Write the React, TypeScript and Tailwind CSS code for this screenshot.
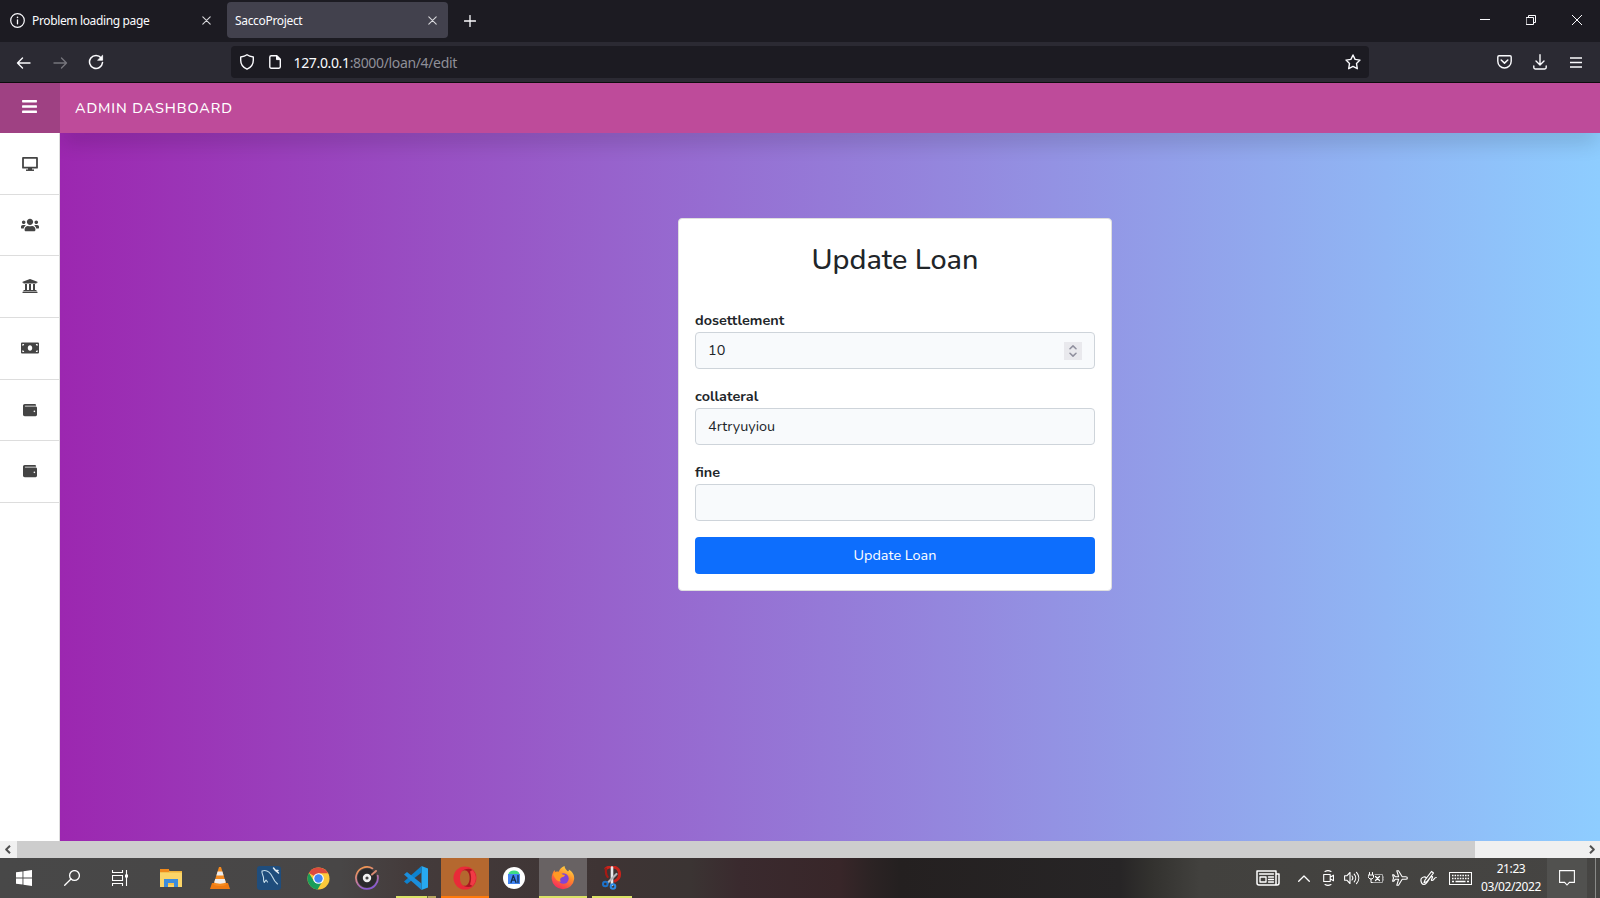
import React from "react";
import { FaBars, FaUsers, FaUniversity, FaMoneyBill, FaWallet } from "react-icons/fa";

type SvgProps = {
  w: number;
  h?: number;
  box?: string;
  className?: string;
  children: React.ReactNode;
};

function Svg({ w, h = w, box, className = "", children }: SvgProps) {
  return (
    <svg
      width={w}
      height={h}
      viewBox={box ?? `0 0 ${w} ${h}`}
      fill="none"
      stroke="currentColor"
      strokeWidth="1.3"
      strokeLinecap="round"
      strokeLinejoin="round"
      className={`block shrink-0 ${className}`}
    >
      {children}
    </svg>
  );
}

const Cross = () => (
  <Svg w={9} className="text-[#d8d8dc]">
    <path d="M.8.8l7.4 7.4M8.2.8L.8 8.2" strokeWidth="1.1" />
  </Svg>
);

function TabBar() {
  return (
    <div className="flex h-[42px] shrink-0 items-center bg-[#1c1b22] text-[12px] text-[#fbfbfe]">
      <div className="-mt-px flex w-[227px] items-center pr-[16px] pl-[10px]">
        <Svg w={15}>
          <circle cx="7.5" cy="7.5" r="6.8" strokeWidth="1.2" />
          <path d="M7.5 6.8v4" strokeWidth="1.3" />
          <path d="M7.5 4.2v.3" strokeWidth="1.5" />
        </Svg>
        <span className="mt-px ml-[7px] flex-1 tracking-[-0.36px] whitespace-nowrap">Problem loading page</span>
        <Cross />
      </div>
      <div className="-mt-[2px] flex h-[36px] w-[221px] items-center justify-between rounded-[4px] bg-[#42414d] pr-[11px] pl-[8px]">
        <span className="mt-[2px] tracking-[-0.33px]">SaccoProject</span>
        <Cross />
      </div>
      <Svg w={12} className="-mt-px ml-4">
        <path d="M6 .5v11M.5 6h11" />
      </Svg>
      <div className="mr-[18px] ml-auto -mt-[2px] flex items-center gap-[36px]">
        <Svg w={10}>
          <path d="M0 4.5h10" strokeWidth="1" strokeLinecap="butt" />
        </Svg>
        <Svg w={10}>
          <path d="M.5 2.5h7v7h-7zM2.5 2.5v-2h7v7h-2" strokeWidth="1" strokeLinejoin="miter" />
        </Svg>
        <Svg w={10}>
          <path d="M0 0l10 10M10 0L0 10" strokeWidth="1" />
        </Svg>
      </div>
    </div>
  );
}

function NavBar() {
  return (
    <div className="flex h-[41px] shrink-0 items-center border-b border-[#0c0c0d] bg-[#2b2a33] text-[#fbfbfe]">
      <Svg w={15} h={12} className="mt-px ml-[16px]">
        <path d="M14 6H1.500M6.500 1l-5 5 5 5" strokeWidth="1.4" />
      </Svg>
      <Svg w={15} h={12} className="mt-px ml-[22px] text-[#76757c]">
        <path d="M1 6h12.500M8.500 1l5 5-5 5" strokeWidth="1.4" />
      </Svg>
      <Svg w={16} className="ml-[20px]">
        <path d="M13.2 4A6.5 6.5 0 1 0 14.5 8.6" strokeWidth="1.5" />
        <path d="M14.6 1.6v4.6h-4.6z" fill="currentColor" strokeWidth=".8" />
      </Svg>
      <div className="ml-[127px] flex h-[32px] w-[1138px] items-center rounded-[4px] bg-[#1c1b22] pr-[8px] pl-[9px]">
        <Svg w={14} h={16}>
          <path
            d="M7 .8C8.600 2 10.800 2.700 13.300 3v3.200c0 4-2.200 7.200-6.300 9C2.900 13.400.7 10.200.7 6.200V3C3.200 2.700 5.400 2 7 .8z"
            strokeWidth="1.4"
          />
        </Svg>
        <Svg w={12} h={14} className="ml-[15px]">
          <path d="M2.200.8h5.600l3.500 3.500v7.500c0 .8-.6 1.400-1.400 1.400H2.200c-.8 0-1.400-.6-1.400-1.400V2.200C.8 1.400 1.400.8 2.200.8z" strokeWidth="1.4" />
          <path d="M7.500.8v3.800h3.800z" fill="currentColor" strokeWidth="1" />
        </Svg>
        <span className="mt-px ml-[12.500px] flex-1 text-[14px] tracking-[-0.35px]">
          127.0.0.1<span className="text-[#8f8f98]">:8000/loan/4/edit</span>
        </span>
        <Svg w={16}>
          <path
            d="M8 1l2.100 4.400 4.900.7-3.500 3.400.8 5.200L8 12.400l-4.300 2.300.8-5.200L1 6.100l4.900-.7z"
            strokeWidth="1.400"
          />
        </Svg>
      </div>
      <Svg w={15} h={14} className="ml-[128px]">
        <path d="M2 .8h11c.7 0 1.200.5 1.200 1.200v4.300a6.700 6.700 0 0 1-13.400 0V2C.8 1.300 1.300.8 2 .8z" strokeWidth="1.400" />
        <path d="M4.200 5l3.300 3.100L10.800 5" strokeWidth="1.500" />
      </Svg>
      <Svg w={14} h={16} className="ml-[21px]">
        <path d="M7 .8v10M3 7l4 4 4-4M.8 12v1.600c0 .8.500 1.400 1.400 1.400h9.600c.9 0 1.400-.6 1.400-1.400V12" strokeWidth="1.400" />
      </Svg>
      <Svg w={12} h={11} className="ml-[23px]">
        <path d="M0 1h12M0 5.500h12M0 10h12" strokeWidth="1.300" strokeLinecap="butt" />
      </Svg>
    </div>
  );
}

const Desktop = () => (
  <Svg w={16} h={14} className="mt-px">
    <path d="M1 .9h14v9.800H1z" strokeWidth="1.800" />
    <path d="M8 11v2" strokeWidth="4" strokeLinecap="butt" />
    <path d="M4 13.200h8" strokeWidth="1.500" strokeLinecap="butt" />
  </Svg>
);

const menu = [
  <Desktop />,
  <FaUsers size={18} />,
  <FaUniversity size={16} className="-mt-[2px]" />,
  <FaMoneyBill size={18} />,
  <FaWallet size={14} className="-mt-px" />,
  <FaWallet size={14} className="-mt-px" />,
];

function Field({ label, value, spinner }: { label: string; value: string; spinner?: boolean }) {
  return (
    <div className="mb-[16px] flex flex-col">
      <span className="h-[23px] text-[14.400px] leading-[23px] font-bold">{label}</span>
      <div className="flex h-[37px] items-center justify-between rounded-[4px] border border-[#ced4da] bg-[#f8fafc] pr-[12px] pl-[12px] text-[14.400px]">
        <span>{value}</span>
        {spinner && (
          <div className="flex h-[18px] w-[18px] items-center justify-center bg-[#e9e9ed]">
            <Svg w={8} h={12} className="text-[#8f8f9d]">
              <path d="M1 3.800l3-2.900 3 2.900M1 8.200l3 2.900 3-2.900" strokeWidth="1.500" />
            </Svg>
          </div>
        )}
      </div>
    </div>
  );
}

function Page() {
  return (
    <div className="flex h-[758px] shrink-0 flex-col overflow-hidden font-['Nunito','Lato',sans-serif] text-[#212529]">
      <div className="relative z-10 flex h-[50px] shrink-0 bg-[#be4b9a] text-white">
        <div className="flex w-[60px] justify-center bg-[#9f4183] pt-[15px] pr-[1px]">
          <FaBars size={17} />
        </div>
        <span className="ml-[15px] text-[14.400px] leading-[50px] font-medium tracking-[0.900px]">ADMIN DASHBOARD</span>
      </div>
      <div className="flex flex-1">
        <div className="relative z-20 flex w-[60px] shrink-0 flex-col border-r border-[#ddd] bg-white text-[#444]">
          {menu.map((icon, i) => (
            <div key={i} className="flex h-[61.700px] items-center justify-center border-b border-[#ddd]">
              {icon}
            </div>
          ))}
        </div>
        <div className="flex flex-1 flex-col bg-[linear-gradient(90deg,#9c27b0,#8ecdff)]">
          <div className="mx-[8px] h-0 shadow-[0_0_22px_6px_rgba(0,0,0,.24)]" />
          <div className="mt-[85px] ml-[618px] flex h-[373px] w-[434px] flex-col rounded-[4px] border border-[#dfdfdf] bg-white px-[16px]">
            <div className="mt-[22px] mb-[30px] text-center text-[28.800px] leading-[38px] font-medium">
              Update Loan
            </div>
            <Field label="dosettlement" value="10" spinner />
            <Field label="collateral" value="4rtryuyiou" />
            <Field label="fine" value="" />
            <div className="flex h-[37px] items-center justify-center rounded-[4px] bg-[#0d6efd] text-[14.400px] text-white">
              Update Loan
            </div>
          </div>
        </div>
      </div>
    </div>
  );
}

function ScrollBar() {
  return (
    <div className="flex h-[17px] shrink-0 items-center bg-[#f0f0f0] text-[#505050]">
      <div className="flex w-[17px] justify-center pr-[2px]">
        <Svg w={6} h={9}>
          <path d="M5 .8L1.200 4.500 5 8.200" strokeWidth="2" strokeLinecap="butt" />
        </Svg>
      </div>
      <div className="h-full w-[1458px] bg-[#cdcdcd]" />
      <div className="ml-auto flex w-[17px] justify-center">
        <Svg w={6} h={9}>
          <path d="M1 .8l3.800 3.700L1 8.200" strokeWidth="2" strokeLinecap="butt" />
        </Svg>
      </div>
    </div>
  );
}

const Folder = () => (
  <Svg w={22} h={19}>
    <g stroke="none">
      <path d="M0 1h8l2 1h12v16H0z" fill="#eeb23a" />
      <path d="M0 0h9v3H0z" fill="#f08a1c" />
      <path d="M0 3.500h22V18H0z" fill="#fbd568" />
      <path d="M4 10h14v8h-4v-4H8v4H4z" fill="#3c8cdc" />
      <path d="M8 14h6v2H8z" fill="#f7c24a" />
    </g>
  </Svg>
);

const Cone = () => (
  <Svg w={20} h={22}>
    <g stroke="none">
      <path d="M2 16h16l2 6H0z" fill="#ee7a12" />
      <path d="M9 0h2l5.500 17.500c-3 2-10 2-13 0z" fill="#f58a1f" />
      <path d="M7.600 4.500h4.800l1.200 4H6.400z" fill="#eee" />
      <path d="M5.200 12h9.600l1 3.500c-3 1.500-8.600 1.500-11.600 0z" fill="#eee" />
    </g>
  </Svg>
);

const Workbench = () => (
  <Svg w={24}>
    <rect width="24" height="24" rx="3" fill="#1f4d7c" stroke="none" />
    <path d="M5 5c4-1.500 8 1 10.500 6 1 2.300 2 4.500 5 7M5 5c-.5 2 1 4 1.500 6.500.3 2-.5 3 .8 5l1.700-2.500 1.500 2" stroke="#c4dcea" strokeWidth="1.100" />
    <path d="M16.500 2l2 2.500 2.500 0M18.500 4.500l3 2.500" stroke="#e6eef4" strokeWidth="1.500" />
  </Svg>
);

const Chrome = () => (
  <Svg w={23} box="0 0 24 24">
    <g stroke="none">
      <circle cx="12" cy="12" r="11.500" fill="#fbc93b" />
      <path d="M12 12L2 6.200A11.500 11.500 0 0 1 22 6.500H12z" fill="#dc4a3d" />
      <path d="M2 6.200A11.500 11.500 0 0 0 11 23.500l5-8.500-8.500.200z" fill="#1a9d5a" />
      <circle cx="12" cy="12" r="5.600" fill="#fff" />
      <circle cx="12" cy="12" r="4.400" fill="#4285f4" />
    </g>
  </Svg>
);

const Disc = () => (
  <Svg w={24}>
    <defs>
      <linearGradient id="ring" x1="0" y1="0" x2=".4" y2="1">
        <stop offset="0" stopColor="#f79a3e" />
        <stop offset=".5" stopColor="#d8868c" />
        <stop offset="1" stopColor="#8a5bd0" />
      </linearGradient>
    </defs>
    <circle cx="12" cy="12" r="9.500" fill="#2b2a2c" stroke="none" />
    <path d="M17.500 2.400A11 11 0 1 0 22.700 9.500" stroke="url(#ring)" strokeWidth="1.700" />
    <path d="M17 8.500l4-3.500" stroke="#d88a72" strokeWidth="2" />
    <circle cx="12" cy="12" r="2.900" stroke="#f0f0f0" strokeWidth="2.600" fill="#444" />
  </Svg>
);

const Code = () => (
  <Svg w={24}>
    <g stroke="none">
      <path d="M17.500 0L24 2.500v19L17.500 24z" fill="#27a9f1" />
      <path d="M17.500 0v6.500L3 18l-3-2.500z" fill="#0d82cf" />
      <path d="M17.500 24v-6.500L3 6 0 8.500z" fill="#1b8fdc" />
    </g>
  </Svg>
);

const Opera = () => (
  <Svg w={24}>
    <g stroke="none" fillRule="evenodd">
      <path d="M12 .5a11.500 11.500 0 1 1 0 23 11.500 11.500 0 0 1 0-23zm0 3.500c-3 0-5 3.500-5 8s2 8 5 8 5-3.500 5-8-2-8-5-8z" fill="#e92a38" />
      <path d="M8.500 6C11 3 16 1.800 19.500 4A11 11 0 0 1 19.500 20c-4 2-8.500 1-11-2 2 2.500 5 2.500 6.800-.500 1.800-3 1.800-8 0-11C13.500 3.500 10.500 3.500 8.500 6z" fill="#a81620" />
      <path d="M17 5.500l2.500-1.500A11 11 0 0 1 19.500 20L17 18.500c1.500-4 1.500-9 0-13z" fill="#f03a45" />
    </g>
  </Svg>
);

const Studio = () => (
  <Svg w={22}>
    <circle cx="11" cy="11" r="11" fill="#fff" stroke="none" />
    <path d="M5.500 7a5.500 3.500 0 0 1 11 0z" fill="#3ddc84" stroke="none" />
    <path d="M5 7h12v10H5z" fill="#4285f4" stroke="none" />
    <path d="M8 15.500l2.300-7 2.700 7M8.800 13.200h3.200M15 8.500v7" stroke="#14304f" strokeWidth="1.300" />
  </Svg>
);

const Fox = () => (
  <Svg w={24}>
    <defs>
      <linearGradient id="fox" x1=".8" y1="0" x2=".3" y2="1">
        <stop offset="0" stopColor="#ffe14a" />
        <stop offset=".45" stopColor="#ff8a2a" />
        <stop offset="1" stopColor="#f5275e" />
      </linearGradient>
    </defs>
    <g stroke="none">
      <path d="M13.500 0c.3 2.500 1.500 3.800 3.500 5.500.800-.5 1-1 .800-2C22 6 23.500 9.500 23.200 13A11.300 11.300 0 0 1 .700 13c-.200-3.500.800-6.500 2.800-9 .2 1 .5 1.500 1 2 1-.5 2.300-.6 3.300-.3 1-2.700 2.700-4.700 5.700-5.700z" fill="url(#fox)" />
      <circle cx="12.500" cy="12.500" r="5.200" fill="#8244d6" />
      <path d="M2 8c3-3 7-2.500 9.500.5l2.500.5c-.5 1.500-2 2-3.500 2.500-1.500 1-2 2.500-.5 4-3 .5-6-2-8-7.500z" fill="#ff9a24" />
    </g>
  </Svg>
);

const Snip = () => (
  <Svg w={20} h={24}>
    <path d="M4 2.500C9-.5 16 .5 17.300 6c1 4.500-1.300 7.500-4.300 9" stroke="#c8241c" strokeWidth="3" />
    <path d="M4 2.500c-.5 4 0 6.500 1.700 8.500" stroke="#a61a14" strokeWidth="2.200" />
    <path d="M10 1.500V19" stroke="#e9e9ec" strokeWidth="2.600" />
    <path d="M14.500 8L6 16.500" stroke="#b3b6bb" strokeWidth="2.200" />
    <circle cx="3.300" cy="18" r="2.300" stroke="#1d72c9" strokeWidth="2" />
    <circle cx="11" cy="20.500" r="2.300" stroke="#2c8be6" strokeWidth="2" />
  </Svg>
);

const apps: { icon: React.ReactNode; bg: string; line: string }[] = [
  { icon: <Folder />, bg: "", line: "" },
  { icon: <Cone />, bg: "", line: "" },
  { icon: <Workbench />, bg: "", line: "" },
  { icon: <Chrome />, bg: "", line: "" },
  { icon: <Disc />, bg: "", line: "" },
  { icon: <Code />, bg: "", line: "mx-[4px] bg-[linear-gradient(90deg,#dbe266_31px,#6d6540_31px,#6d6540_32px,#b5a55e_32px)]" },
  { icon: <Opera />, bg: "bg-[#b5682f]", line: "bg-[#ff7a0c]" },
  { icon: <Studio />, bg: "", line: "" },
  { icon: <Fox />, bg: "bg-[#686263]", line: "bg-[#dbe266]" },
  { icon: <Snip />, bg: "", line: "mx-[4px] bg-[#dbe266]" },
];

function TaskBar() {
  return (
    <div className="flex h-[40px] shrink-0 bg-[linear-gradient(90deg,#484848_0,#484646_340px,#443b3b_410px,#3e3434_600px,#3b3433_690px,#3a2a2e_740px,#382629_840px,#2c2324_870px,#242020_900px,#272526_1120px,#32312e_1150px,#42413e_1200px,#464543_1600px)] text-white">
      <div className="flex w-[48px] items-center justify-center">
        <Svg w={16}>
          <path d="M0 2.300L6.500 1.400v6.200H0zM7.400 1.300L16 0v7.600H7.400zM0 8.400h6.500v6.200L0 13.700zM7.400 8.400H16V16l-8.600-1.300z" fill="currentColor" stroke="none" />
        </Svg>
      </div>
      <div className="flex w-[48px] items-center justify-center">
        <Svg w={16}>
          <circle cx="10.500" cy="5.500" r="4.900" />
          <path d="M7 9L.7 15.300" />
        </Svg>
      </div>
      <div className="mr-[3px] flex w-[48px] items-center justify-center">
        <Svg w={16}>
          <path d="M.5 0v2.500h10V0M.5 16v-2.500h10V16M.5 5.500h10v5H.5zM14.500 0v16" strokeWidth="1.100" strokeLinecap="butt" strokeLinejoin="miter" />
          <path d="M13 4.500h3v3h-3z" fill="currentColor" stroke="none" />
        </Svg>
      </div>
      <div className="flex gap-px">
        {apps.map((app, i) => (
          <div key={i} className={`flex w-[48px] flex-col ${app.bg}`}>
            <div className="flex h-[38px] items-center justify-center pt-[2px]">{app.icon}</div>
            <div className={`h-[2px] ${app.line}`} />
          </div>
        ))}
      </div>
      <div className="ml-auto flex items-center">
        <Svg w={24} h={16}>
          <path d="M1 1h19v14H3a2 2 0 0 1-2-2zM20 4h3v9a2 2 0 0 1-2 2h-2" strokeWidth="1.500" />
          <path d="M3.500 4h14M12.500 7h5M12.500 9.500h5M12.500 12h5M4 7h6v5H4z" strokeWidth="1.300" />
        </Svg>
        <Svg w={12} h={7} className="ml-[18px]">
          <path d="M.7 6.300L6 1l5.300 5.300" />
        </Svg>
        <Svg w={11} h={16} className="ml-[13px]">
          <path d="M2 1.500c2-1.200 4-1.200 6 0M2 14.500c2 1.200 4 1.200 6 0M.7 4.500h6.500v7H.7zM7.500 7l3-1.800v5.600L7.500 9" strokeWidth="1.100" />
        </Svg>
        <Svg w={16} h={14} className="ml-[10px]">
          <path d="M.6 4.800h2.200L6 1.500v11L2.800 9.200H.6zM8 5c1 1.200 1 2.800 0 4M10.200 3.200c2 2.200 2 5.400 0 7.600M12.500 1.300c3 3.400 3 8 0 11.400" strokeWidth="1.100" />
        </Svg>
        <Svg w={16} h={12} className="ml-[8px]">
          <path d="M1.500.5v2M4.500.5v2M.5 3h5v2.500L4 7H2L.5 5.500zM3 7v3.500h2" strokeWidth="1" />
          <path d="M7 2.500h7.500v8H5M14.500 5H16v3h-1.500" stroke="#aaa" strokeWidth="1" />
          <path d="M7.500 4.500l4 4M11.500 4.500l-4 4" strokeWidth="1.200" />
        </Svg>
        <Svg w={16} className="ml-[8px]">
          <path d="M15.400 8c0-.8-.7-1.300-1.700-1.300h-3.500L6.500.8H4.800l1.800 5.900H3.200L1.800 4.800H.6L1.500 8l-.9 3.200h1.200l1.400-1.900h3.400l-1.800 5.900h1.700l3.700-5.900h3.500c1 0 1.700-.5 1.700-1.300z" strokeWidth="1.100" />
        </Svg>
        <Svg w={17} h={16} className="ml-[12px]">
          <path d="M5 10L11.500 1.500l2 1.500L7 11.500l-3 1.200zM1 9c1.500-2.500 4-2.500 5.500-1M1 9c-.5 3 1 5.500 3 5.500 4 0 5-8 8-8 2 0-2 4 0 4s2-3 4.200-3" strokeWidth="1.200" />
        </Svg>
        <Svg w={23} h={13} className="ml-[12px]">
          <path d="M.5.5h22v12H.5z" strokeWidth="1.100" strokeLinejoin="miter" />
          <path d="M3 3.500h17M3 6.500h17" strokeWidth="1.300" strokeDasharray="1.500 1.100" strokeLinecap="butt" />
          <path d="M3 9.500h2M6.500 9.500h10M18 9.500h2" strokeWidth="1.300" strokeLinecap="butt" />
        </Svg>
        <div className="mr-[6px] ml-[9px] w-[60px] text-center text-[12px] leading-[18px] tracking-[-0.400px] whitespace-nowrap">
          <div>21:23</div>
          <div>03/02/2022</div>
        </div>
        <div className="flex h-full w-[40px] items-center justify-center bg-[#51514f]">
          <Svg w={16}>
            <path d="M.6.6h14.800v11.800h-5L8 15l-2.400-2.600h-5z" strokeWidth="1.100" strokeLinejoin="miter" />
          </Svg>
        </div>
        <div className="mr-[4px] ml-[8px] h-full w-px bg-[#8a8a88]" />
      </div>
    </div>
  );
}

export default function App() {
  return (
    <div className="flex h-[898px] w-[1600px] flex-col overflow-hidden font-['Noto_Sans',sans-serif]">
      <TabBar />
      <NavBar />
      <Page />
      <ScrollBar />
      <TaskBar />
    </div>
  );
}
